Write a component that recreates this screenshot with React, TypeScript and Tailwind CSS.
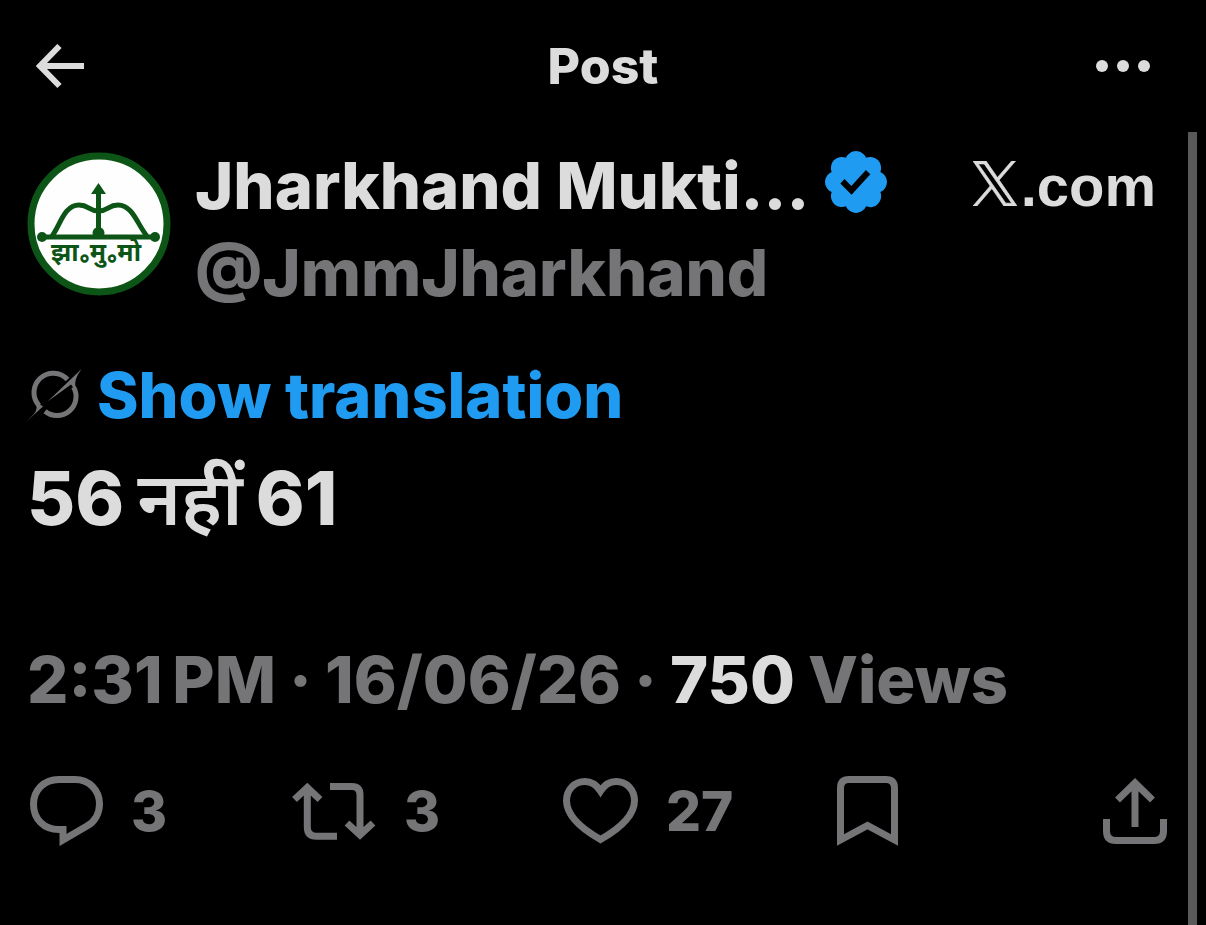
import type { ReactNode } from 'react'

function BackIcon() {
  return (
    <svg viewBox="0 0 48 45" className="w-12 h-[45px]" fill="none" stroke="currentColor" strokeWidth="6">
      <path d="M23.500 2L4 22L23.500 42M4 22H48" />
    </svg>
  )
}

function MoreIcon() {
  return (
    <svg viewBox="0 0 54 12" className="w-[54px] h-3" fill="currentColor">
      <circle cx="6" cy="6" r="6" />
      <circle cx="27" cy="6" r="6" />
      <circle cx="48" cy="6" r="6" />
    </svg>
  )
}

function PartyLogo() {
  return (
    <svg viewBox="0 0 144 144" className="w-36 h-36 shrink-0" role="img" aria-label="Jharkhand Mukti Morcha">
      <circle cx="72" cy="72" r="68" fill="#fdfefd" stroke="#0d5516" strokeWidth="7" />
      <g fill="none" stroke="#0d5516">
        <path d="M14 85H130" strokeWidth="5" />
        <path d="M25 84C33 74 37 53 52 53C62 53 62 59 71.500 59S81 53 91 53C106 53 111 74 120 84" strokeWidth="5" />
        <path d="M71.500 40V82" strokeWidth="5" />
      </g>
      <g fill="#0d5516">
        <path d="M71.500 31l7.500 11h-15z" />
        <circle cx="15" cy="85" r="5" />
        <circle cx="128" cy="85" r="5" />
        <circle cx="71.500" cy="81" r="6" />
        <text x="69" y="109" textAnchor="middle" fontSize="25" fontWeight="700" className="font-['Noto_Sans','Noto_Sans_Devanagari',sans-serif]">
          झा<tspan dy="8">॰</tspan><tspan dy="-8">मु</tspan><tspan dy="8">॰</tspan><tspan dy="-8">मो</tspan>
        </text>
      </g>
    </svg>
  )
}

function VerifiedIcon() {
  return (
    <svg viewBox="1.6 1.6 18.8 18.8" className="w-[62px] h-[62px] shrink-0 text-[#1f9cf2]" fill="currentColor" role="img" aria-label="Verified account">
      <path d="M20.396 11c-.018-.646-.215-1.275-.57-1.816-.354-.54-.852-.972-1.438-1.246.223-.607.27-1.264.14-1.897-.131-.634-.437-1.218-.882-1.687-.47-.445-1.053-.75-1.687-.882-.633-.13-1.29-.083-1.897.14-.273-.587-.704-1.086-1.245-1.44S11.647 1.62 11 1.604c-.646.017-1.273.213-1.813.568s-.969.854-1.24 1.44c-.608-.223-1.267-.272-1.902-.14-.635.13-1.22.436-1.69.882-.445.47-.749 1.055-.878 1.688-.13.633-.08 1.29.144 1.896-.587.274-1.087.705-1.443 1.245-.356.54-.555 1.17-.574 1.817.02.647.218 1.276.574 1.817.356.54.856.972 1.443 1.245-.224.606-.274 1.263-.144 1.896.13.634.433 1.218.877 1.688.47.443 1.054.747 1.687.878.633.132 1.29.084 1.897-.136.274.586.705 1.084 1.246 1.439.54.354 1.17.551 1.816.569.647-.016 1.276-.213 1.817-.567s.972-.854 1.245-1.44c.604.239 1.266.296 1.903.164.636-.132 1.22-.447 1.68-.907.46-.46.776-1.044.908-1.681s.075-1.299-.165-1.903c.586-.274 1.084-.705 1.439-1.246.354-.54.551-1.17.569-1.816zM9.662 14.85l-3.429-3.428 1.293-1.302 2.072 2.072 4.4-4.794 1.347 1.246z" />
    </svg>
  )
}

function XLogo() {
  return (
    <svg viewBox="0 0 1200 1227" className="w-11 h-[45px] shrink-0" fill="currentColor" stroke="currentColor" strokeWidth="20" role="img" aria-label="X">
      <path d="M714.163 519.284L1160.89 0H1055.03L667.137 450.887L357.328 0H0L468.492 681.821L0 1226.37H105.866L515.491 750.218L842.672 1226.37H1200L714.137 519.284H714.163ZM569.165 687.828L521.697 619.934L144.011 79.6944H306.615L611.412 515.685L658.88 583.579L1055.08 1150.3H892.476L569.165 687.854V687.828Z" />
    </svg>
  )
}

function GrokIcon() {
  return (
    <svg viewBox="0 0 56 54" className="w-14 h-[54px] text-[#757577]" fill="currentColor">
      <g fill="none" stroke="currentColor" strokeWidth="5">
        <path d="M40.500 11.500A19 19 0 0 0 12 37.500" />
        <path d="M18 43.200A19 19 0 0 0 46.500 19" />
      </g>
      <path d="M54.500 1L20.500 33.500L44 16.500L49.500 24C46.500 14 49 9 54.500 1Z" />
      <path d="M0 53L16 38.500L8.500 33C12 43 7 46 0 53Z" />
    </svg>
  )
}

function ReplyIcon() {
  return (
    <svg viewBox="0 0 73 70" className="w-[73px] h-[70px]" fill="none" stroke="currentColor" strokeWidth="7">
      <path d="M33 53.500H29C14 53.500 3.500 43 3.500 28.500S14 3.500 29 3.500H45C59 3.500 69.500 14 69.500 28C69.500 37 65 45.500 57 50L33 64Z" />
    </svg>
  )
}

function RepostIcon() {
  return (
    <svg viewBox="0 0 84 58" className="w-[84px] h-[58px]" fill="none" stroke="currentColor" strokeWidth="7">
      <path d="M2.500 17.500L15.300 5.500L28 17.500M15.300 6V45Q15.300 54.300 24.500 54.300H45" />
      <path d="M38 4.600H60Q68 4.600 68 13V53M55 41L68 53L81 41" />
    </svg>
  )
}

function LikeIcon() {
  return (
    <svg viewBox="0 0 75 66" className="w-[75px] h-[66px]" fill="none" stroke="currentColor" strokeWidth="7">
      <path d="M37.500 13C33 6 28 3.500 22 3.500C11 3.500 3.500 12 3.500 22.500C3.500 38 19 51 37.500 61.500C56 51 71.500 38 71.500 22.500C71.500 12 64 3.500 53 3.500C47 3.500 42 6 37.500 13Z" />
    </svg>
  )
}

function BookmarkIcon() {
  return (
    <svg viewBox="0 0 61 70" className="w-[61px] h-[70px]" fill="none" stroke="currentColor" strokeWidth="7">
      <path d="M3.500 12Q3.500 3.500 12 3.500H49Q57.500 3.500 57.500 12V64L30.500 49.500L3.500 64Z" />
    </svg>
  )
}

function ShareIcon() {
  return (
    <svg viewBox="0 0 64 66" className="w-16 h-[66px]" fill="none" stroke="currentColor" strokeWidth="7">
      <path d="M14.500 22L32 5L49.500 22M32 6V49M3.500 41V53Q3.500 62.500 13 62.500H51Q60.500 62.500 60.500 53V41" />
    </svg>
  )
}

function Action({ label, count, children }: { label: string; count?: string; children: ReactNode }) {
  return (
    <button aria-label={label} className="flex items-center gap-7 text-[55px] leading-none">
      {children}
      {count && <span>{count}</span>}
    </button>
  )
}

export default function App() {
  return (
    <div className="min-h-screen flex flex-col bg-black text-[#dcdcdc] font-['Inter','Noto_Sans',sans-serif] font-extrabold">
      <header className="h-[132px] shrink-0 grid grid-cols-[1fr_auto_1fr] items-center px-9">
        <button aria-label="Back" className="justify-self-start">
          <BackIcon />
        </button>
        <h1 className="text-[50px] leading-none">Post</h1>
        <button aria-label="More" className="justify-self-end mr-5">
          <MoreIcon />
        </button>
      </header>

      <div className="flex-1 flex pr-[9px]">
        <main className="flex-1 min-w-0 pl-[27px]">
          <div className="flex items-start gap-6 pt-5 pr-8">
            <PartyLogo />
            <div className="flex-1 min-w-0">
              <div className="flex items-center h-[60px] gap-4">
                <h2 className="pt-1.5 text-[65px] leading-none whitespace-nowrap">Jharkhand Mukti...</h2>
                <VerifiedIcon />
                <a href="#x" aria-label="X.com" className="ml-auto pt-2 flex items-baseline gap-1 font-['Liberation_Sans',sans-serif] font-bold text-[58px] leading-none">
                  <XLogo />
                  <span>.com</span>
                </a>
              </div>
              <p className="mt-7 text-[65px] leading-none text-[#757577]">@JmmJharkhand</p>
            </div>
          </div>

          <button className="mt-[50px] flex items-center gap-[14px] text-[63px] leading-[80px] text-[#1f9cf2]">
            <GrokIcon />
            Show translation
          </button>
          <p className="mt-2 flex items-baseline gap-[13px] text-[74px] leading-[110px]">
            <span>56</span>
            <span className="font-['Noto_Sans',sans-serif] font-semibold leading-none">नहीं</span>
            <span>61</span>
          </p>

          <p className="mt-[82px] flex items-baseline gap-[13px] text-[65px] leading-[90px] text-[#757577] whitespace-nowrap">
            <span>2:31{'\u202f'}PM</span>
            <span>·</span>
            <span>16/06/26</span>
            <span>·</span>
            <span className="text-[#dcdcdc]">750</span>
            <span>Views</span>
          </p>

          <div className="mt-[51px] pl-[3px] pr-[21px] grid grid-cols-[262fr_271fr_274fr_266fr_64px] items-center text-[#757577]">
            <Action label="Reply" count="3"><ReplyIcon /></Action>
            <Action label="Repost" count="3"><RepostIcon /></Action>
            <Action label="Like" count="27"><LikeIcon /></Action>
            <Action label="Bookmark"><BookmarkIcon /></Action>
            <Action label="Share"><ShareIcon /></Action>
          </div>
        </main>
        <div className="w-[9px] bg-[#595959]"></div>
      </div>
    </div>
  )
}
